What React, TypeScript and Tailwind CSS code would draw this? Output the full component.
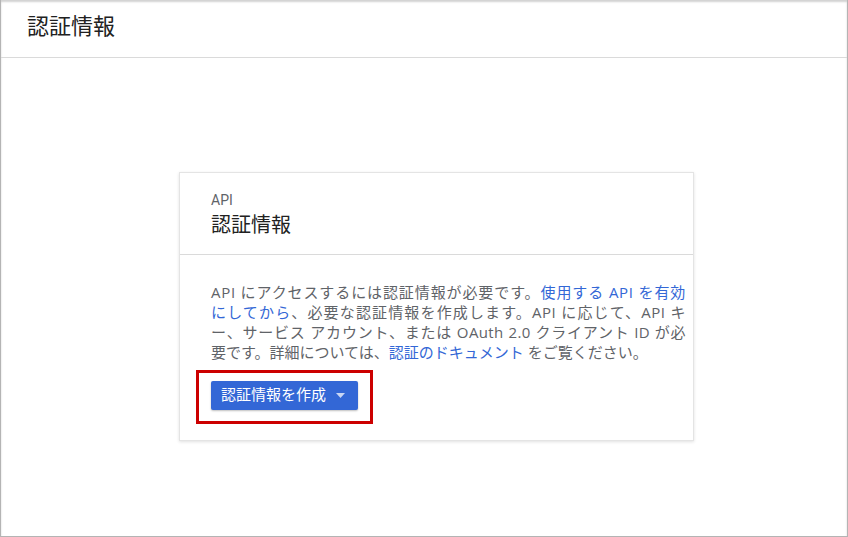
import React from "react";

export default function App() {
  const font = { fontFamily: "Roboto, 'Noto Sans CJK JP', sans-serif" };
  const bodyFont = { fontFamily: "'Open Sans', 'Noto Sans CJK JP', sans-serif" };
  const jl = "block text-justify [text-align-last:justify]";
  return (
    <div
      style={font}
      className="w-[848px] h-[537px] bg-white border-x border-b border-[#b4b4b4] shadow-[inset_0_2px_2px_rgba(0,0,0,0.18)] flex flex-col overflow-hidden"
    >
      <div className="h-[58px] shrink-0 border-b border-[#dadada] pl-[26px] flex items-center">
        <h1 className="text-[22px] leading-[28px] text-[#212121] mt-[-3px]">認証情報</h1>
      </div>
      <div className="pl-[178px] pt-[114px]">
        <div className="w-[515px] bg-white border border-[#e4e4e4] shadow-[0_1px_3px_rgba(0,0,0,0.12)]">
          <div className="px-[31px] pt-[17px] pb-[15px] border-b border-[#dadada]">
            <div className="text-[14px] leading-[20px] text-[#5f6368]">API</div>
            <div className="text-[20px] leading-[28px] text-[#212121] mt-[1px]">認証情報</div>
          </div>
          <div className="pl-[31px] pr-[6px] pt-[27px] pb-[30px]">
            <p style={bodyFont} className="w-[475px] text-[15px] leading-[20px] text-[#5f6368] whitespace-nowrap">
              <span className={`${jl} tracking-[0.7px]`}>
                API にアクセスするには認証情報が必要です。<span className="text-[#3367d6]">使用する API を有効</span>
              </span>
              <span className={`${jl} tracking-[0.5px]`}>
                <span className="text-[#3367d6]">にしてから</span>、必要な認証情報を作成します。API に応じて、API キ
              </span>
              <span className={`${jl} tracking-[0.4px]`}>ー、サービス アカウント、または OAuth 2.0 クライアント ID が必</span>
              <span className="block">
                要です。詳細については、<span className="text-[#3367d6]">認証のドキュメント</span> をご覧ください。
              </span>
            </p>
            <div className="mt-[19px] relative inline-block">
              <button className="h-[29px] pl-[10px] pr-[13px] bg-[#3367d6] text-white text-[15px] rounded-[2px] shadow-[0_1px_2px_rgba(0,0,0,0.25)] flex items-center gap-[10px]">
                <span>認証情報を作成</span>
                <svg width="9" height="5" viewBox="0 0 9 5">
                  <path d="M0 0 L9 0 L4.5 5 Z" fill="#c9d6f3" />
                </svg>
              </button>
              <div className="absolute left-[-15px] right-[-15px] top-[-11px] bottom-[-14px] border-[3px] border-[#cc0000] pointer-events-none" />
            </div>
          </div>
        </div>
      </div>
    </div>
  );
}
